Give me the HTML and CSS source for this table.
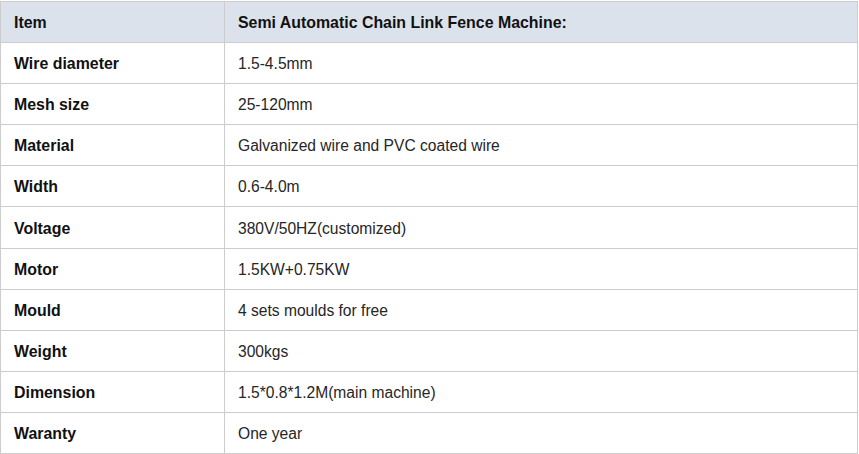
FILE: index.html
```html
<!DOCTYPE html>
<html>
<head>
<meta charset="utf-8">
<link rel="stylesheet" href="styles.css">
</head>
<body>
<table class="spec">
  <thead>
    <tr><th class="label">Item</th><th class="value">Semi Automatic Chain Link Fence Machine:</th></tr>
  </thead>
  <tbody>
    <tr><td class="label">Wire diameter</td><td class="value">1.5-4.5mm</td></tr>
    <tr><td class="label">Mesh size</td><td class="value">25-120mm</td></tr>
    <tr><td class="label">Material</td><td class="value">Galvanized wire and PVC coated wire</td></tr>
    <tr><td class="label">Width</td><td class="value">0.6-4.0m</td></tr>
    <tr><td class="label">Voltage</td><td class="value">380V/50HZ(customized)</td></tr>
    <tr><td class="label">Motor</td><td class="value">1.5KW+0.75KW</td></tr>
    <tr><td class="label">Mould</td><td class="value">4 sets moulds for free</td></tr>
    <tr><td class="label">Weight</td><td class="value">300kgs</td></tr>
    <tr><td class="label">Dimension</td><td class="value">1.5*0.8*1.2M(main machine)</td></tr>
    <tr><td class="label">Waranty</td><td class="value">One year</td></tr>
  </tbody>
</table>
</body>
</html>
```
FILE: styles.css
```css
html, body {
  margin: 0;
  padding: 0;
  background: #ffffff;
}
body {
  padding-top: 1px;
  font-family: "Liberation Sans", Arial, sans-serif;
  font-size: 15.6px;
  color: #1e1e1e;
}
.spec {
  border-collapse: collapse;
  width: 858px;
  table-layout: fixed;
}
.spec th, .spec td {
  border: 1px solid #cccccc;
  height: 41.1px;
  padding: 2px 13px 0 13px;
  text-align: left;
  vertical-align: middle;
  box-sizing: border-box;
}
.spec thead th {
  background: #dce2ec;
  font-weight: bold;
  color: #111111;
}
.spec .label {
  width: 224px;
  font-weight: bold;
  font-size: 15.9px;
  color: #111111;
}
.spec th.value {
  font-size: 15.9px;
}
.spec td.value {
  font-weight: normal;
  color: #262626;
}
```
